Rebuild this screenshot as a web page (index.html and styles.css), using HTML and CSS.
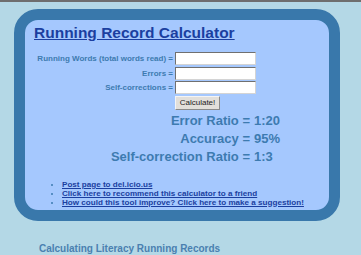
FILE: index.html
```html
<!DOCTYPE html>
<html lang="en">
<head>
    <meta charset="UTF-8">
    <meta name="viewport" content="width=device-width, initial-scale=1.0">
    <title>Running Record Calculator</title>
    <link rel="stylesheet" href="styles.css">
</head>
<body>
    <div class="topbar"></div>

    <div class="calc">
        <h1><a href="#">Running Record Calculator</a></h1>

        <form class="inputs" id="calculatorForm">
            <label for="words">Running Words (total words read) =</label>
            <input type="text" id="words" name="words">

            <label for="errors">Errors =</label>
            <input type="text" id="errors" name="errors">

            <label for="selfcorr">Self-corrections =</label>
            <input type="text" id="selfcorr" name="selfcorr">

            <span></span>
            <button type="button">Calculate!</button>
        </form>

        <div class="results">
            <span class="res-label">Error Ratio =</span><span>1:20</span>
            <span class="res-label">Accuracy =</span><span>95%</span>
            <span class="res-label">Self-correction Ratio =</span><span>1:3</span>
        </div>

        <ul class="links">
            <li><a href="#">Post page to del.icio.us</a></li>
            <li><a href="#">Click here to recommend this calculator to a friend</a></li>
            <li><a href="#">How could this tool improve? Click here to make a suggestion!</a></li>
        </ul>
    </div>

    <h2 class="footer">Calculating Literacy Running Records</h2>
</body>
</html>
```

FILE: styles.css
```css
body {
    font-family: "Liberation Sans", Arial, sans-serif;
    background-color: #b4d8e6;
    margin: 0;
    padding: 0;
}

.topbar {
    height: 2px;
    background-color: #6e6e6e;
}

.calc {
    width: 304px;
    height: 190px;
    margin: 7px 0 0 14px;
    border: 11px solid #3978ab;
    border-radius: 24px;
    background-color: #a5c8fe;
}

.calc h1 {
    margin: 3px 0 0 9px;
    font-size: 15.5px;
    line-height: 20px;
}

.calc h1 a {
    color: #1b3fa0;
}

.inputs {
    display: grid;
    grid-template-columns: 148px 81px;
    column-gap: 2px;
    row-gap: 1.5px;
    align-items: center;
    margin-top: 9px;
}

.inputs label {
    text-align: right;
    white-space: nowrap;
    font-size: 8px;
    font-weight: bold;
    color: #3d7bb0;
}

.inputs input {
    height: 13px;
    margin: 0;
    padding: 0;
    box-sizing: border-box;
    background-color: #fff;
    border: 1px solid #d4d4d4;
    border-top-color: #707070;
    border-left-color: #707070;
}

.inputs button {
    justify-self: start;
    width: 45px;
    height: 14px;
    margin: 0;
    padding: 0;
    font-family: "Liberation Sans", Arial, sans-serif;
    font-size: 8px;
    color: #222;
    background-color: #e2dfda;
    border: 1px solid #8a8a8a;
    border-top-color: #f4f4f4;
    border-left-color: #f4f4f4;
}

.results {
    display: grid;
    grid-template-columns: 225px auto;
    column-gap: 4px;
    margin-top: 2px;
    font-size: 13px;
    line-height: 18px;
    font-weight: bold;
    color: #3d7bb0;
}

.res-label {
    text-align: right;
}

.links {
    margin: 14px 0 0 0;
    padding-left: 37px;
    font-size: 8.1px;
    line-height: 9px;
    font-weight: bold;
    color: #3d7bb0;
}

.links a {
    color: #1b3fa0;
}

.footer {
    margin: 22px 0 0 39px;
    font-size: 10px;
    color: #4a80b0;
}
```
